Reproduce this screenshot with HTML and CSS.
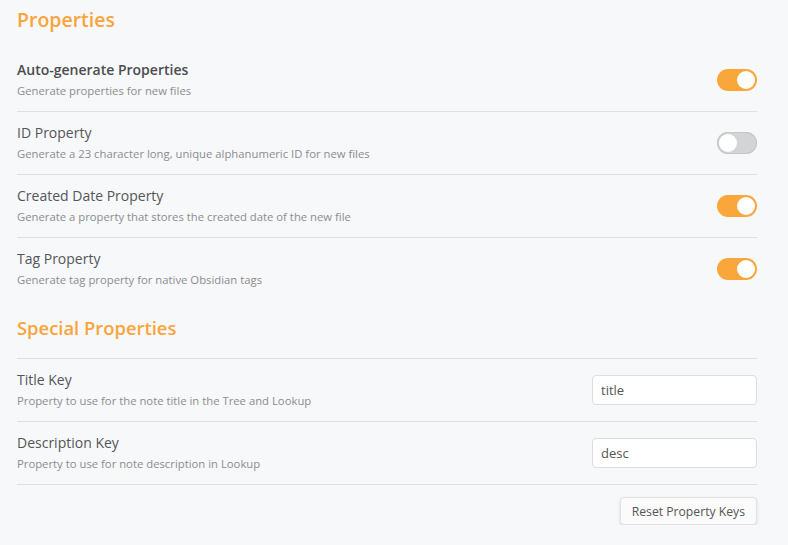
FILE: index.html
```html
<!DOCTYPE html>
<html>
<head>
<meta charset="utf-8">
<link rel="stylesheet" href="styles.css">
</head>
<body>
<div class="page">
  <h2 class="section-title">Properties</h2>
  <div class="setting first">
    <div class="info">
      <div class="name strong">Auto-generate Properties</div>
      <div class="desc">Generate properties for new files</div>
    </div>
    <div class="control"><div class="toggle on"><span class="knob"></span></div></div>
  </div>
  <div class="setting">
    <div class="info">
      <div class="name">ID Property</div>
      <div class="desc">Generate a 23 character long, unique alphanumeric ID for new files</div>
    </div>
    <div class="control"><div class="toggle"><span class="knob"></span></div></div>
  </div>
  <div class="setting">
    <div class="info">
      <div class="name">Created Date Property</div>
      <div class="desc">Generate a property that stores the created date of the new file</div>
    </div>
    <div class="control"><div class="toggle on"><span class="knob"></span></div></div>
  </div>
  <div class="setting">
    <div class="info">
      <div class="name">Tag Property</div>
      <div class="desc">Generate tag property for native Obsidian tags</div>
    </div>
    <div class="control"><div class="toggle on"><span class="knob"></span></div></div>
  </div>

  <h2 class="section-title second">Special Properties</h2>
  <div class="setting">
    <div class="info">
      <div class="name">Title Key</div>
      <div class="desc">Property to use for the note title in the Tree and Lookup</div>
    </div>
    <div class="control"><input class="text-input" type="text" value="title"></div>
  </div>
  <div class="setting last">
    <div class="info">
      <div class="name">Description Key</div>
      <div class="desc">Property to use for note description in Lookup</div>
    </div>
    <div class="control"><input class="text-input" type="text" value="desc"></div>
  </div>
  <div class="actions">
    <button class="btn">Reset Property Keys</button>
  </div>
</div>
</body>
</html>
```
FILE: styles.css
```css
html, body {
  margin: 0;
  padding: 0;
  background: #f7f8fa;
}
body {
  font-family: "Open Sans", "Noto Sans", sans-serif;
  color: #555;
}
.page {
  padding: 4px 31px 0 17px;
}
.section-title {
  margin: 0;
  font-size: 19.5px;
  font-weight: 600;
  line-height: 32px;
  color: #f9a43c;
  padding-bottom: 13px;
}
.section-title.second {
  font-size: 18.4px;
  margin-top: 12px;
  padding-bottom: 14px;
}
.setting {
  display: flex;
  align-items: center;
  border-top: 1px solid #dfe0e3;
  padding: 11px 0;
}
.setting.first {
  border-top: none;
}
.setting.last {
  border-bottom: 1px solid #dfe0e3;
}
.info {
  flex: 1;
}
.name {
  font-size: 14px;
  line-height: 20px;
  color: #555558;
}
.name.strong {
  font-weight: 600;
  color: #4c4c50;
}
.desc {
  font-size: 11.3px;
  line-height: 18px;
  margin-top: 2px;
  color: #8c8c90;
}
.control {
  display: flex;
  align-items: center;
}
.toggle {
  width: 40px;
  height: 22px;
  border-radius: 11px;
  background: #d4d4d6;
  box-shadow: inset 0 0 0 1px #c6c6c8;
  position: relative;
  box-sizing: border-box;
}
.toggle .knob {
  position: absolute;
  top: 2px;
  left: 2px;
  width: 18px;
  height: 18px;
  border-radius: 50%;
  background: #fff;
}
.toggle.on {
  background: #f9a63a;
  box-shadow: none;
}
.toggle.on .knob {
  left: 20px;
}
.text-input {
  width: 165px;
  height: 30px;
  box-sizing: border-box;
  border: 1px solid #dddde0;
  border-radius: 4px;
  background: #fff;
  padding: 0 8px;
  font-family: inherit;
  font-size: 13px;
  color: #555;
  outline: none;
}
.actions {
  display: flex;
  justify-content: flex-end;
  padding-top: 12px;
}
.btn {
  height: 28px;
  padding: 0 11px;
  border: 1px solid #e2e2e4;
  border-radius: 4px;
  background: #fbfbfc;
  box-shadow: 0 1px 3px rgba(0,0,0,0.12);
  font-family: inherit;
  font-size: 12.2px;
  color: #555;
}
```
